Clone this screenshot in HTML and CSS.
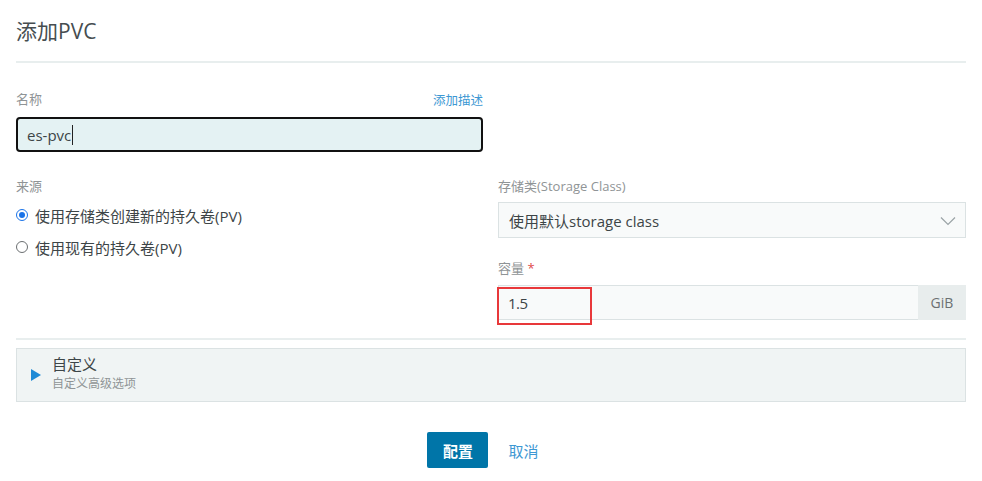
FILE: index.html
```html
<!DOCTYPE html>
<html lang="zh">
<head>
<meta charset="utf-8">
<title>添加PVC</title>
<link rel="stylesheet" href="styles.css">
</head>
<body>
<div class="page">
  <h1 class="title">添加PVC</h1>
  <div class="rule"></div>

  <div class="name-row">
    <div class="label-line">
      <span class="label">名称</span>
      <a class="link small">添加描述</a>
    </div>
    <div class="name-input">es-pvc<span class="caret"></span></div>
  </div>

  <div class="cols">
    <div class="col">
      <div class="label">来源</div>
      <div class="radios">
        <label class="radio"><span class="dot on"></span>使用存储类创建新的持久卷(PV)</label>
        <label class="radio"><span class="dot"></span>使用现有的持久卷(PV)</label>
      </div>
    </div>
    <div class="col">
      <div class="label">存储类(Storage Class)</div>
      <div class="select">
        <span>使用默认storage class</span>
        <svg class="chev" width="16" height="10" viewBox="0 0 16 10"><path d="M1 1.5 L8 8.5 L15 1.5" fill="none" stroke="#9aa3a6" stroke-width="1.2"/></svg>
      </div>
      <div class="label cap-label">容量 <span class="req">*</span></div>
      <div class="cap">
        <div class="cap-input"><span class="cap-val">1.5</span><span class="mark"></span></div>
        <div class="addon">GiB</div>
      </div>
    </div>
  </div>

  <div class="rule rule2"></div>

  <div class="custom">
    <svg class="tri" width="10" height="12" viewBox="0 0 10 12"><path d="M0 0 L10 6 L0 12 Z" fill="#1e8ad6"/></svg>
    <div class="custom-text">
      <div class="custom-title">自定义</div>
      <div class="custom-sub">自定义高级选项</div>
    </div>
  </div>

  <div class="actions">
    <button class="btn">配置</button>
    <a class="link cancel">取消</a>
  </div>
</div>
</body>
</html>
```

FILE: styles.css
```css
* { box-sizing: border-box; }
html, body { margin: 0; padding: 0; background: #fff; }
body {
  font-family: "Open Sans", "Noto Sans CJK SC", sans-serif;
  color: #4a4a4a;
}
.page { padding: 0 16px; width: 982px; }
.title {
  margin: 0;
  padding-top: 17px;
  height: 61px;
  font-size: 21px;
  font-weight: 400;
  line-height: 28px;
  color: #464d50;
}
.rule { height: 2px; background: #e8eeee; }
.name-row { width: 467px; margin-top: 26px; }
.label-line { display: flex; justify-content: space-between; align-items: center; height: 20px; }
.label { font-size: 13px; color: #8f9496; line-height: 20px; height: 20px; }
.link { color: #3d98d3; cursor: pointer; }
.small { font-size: 12.5px; }
.name-input {
  margin-top: 8px;
  height: 35px;
  border: 2px solid #111;
  border-radius: 4px;
  background: #e4f2f3;
  padding: 0 9px;
  font-size: 15px;
  color: #3d4547;
  display: flex;
  align-items: center;
}
.caret { display: inline-block; width: 1px; height: 20px; background: #222; margin-left: 1px; }
.cols { display: grid; grid-template-columns: 467px 468px; column-gap: 15px; margin-top: 24px; }
.radios { margin-top: 3px; }
.radio {
  display: flex; align-items: center; height: 32px;
  font-size: 15px; color: #3d4547;
}
.dot {
  width: 12px; height: 12px; border-radius: 50%;
  border: 1px solid #6b6f71; background: #fff;
  margin: 0 7px 0 0; position: relative; flex: none;
}
.dot.on { border-color: #1a73e8; }
.dot.on::after {
  content: ""; position: absolute; left: 2px; top: 2px;
  width: 6px; height: 6px; border-radius: 50%; background: #1a73e8;
}
.select {
  margin-top: 6px;
  height: 36px;
  border: 1px solid #dbe2e3;
  background: #f8fafa;
  display: flex; align-items: center; justify-content: space-between;
  padding: 0 9px 0 10px;
  font-size: 15px; color: #3d4547;
}
.chev { margin-top: 1px; }
.cap-label { margin-top: 20px; }
.req { color: #e04a4a; }
.cap { margin-top: 7px; display: flex; height: 35px; }
.cap-input {
  flex: 1; position: relative;
  border: 1px solid #dbe2e3; border-right: none;
  background: #f8fafa;
  display: flex; align-items: center; padding-left: 9px;
  font-size: 15px; color: #3d4547;
}
.cap-val { letter-spacing: -0.5px; }
.mark {
  position: absolute; left: -2px; top: 1px; width: 95px; height: 38px;
  border: 2px solid #e8383a;
}
.addon {
  width: 48px; background: #e8eded;
  display: flex; align-items: center; justify-content: center;
  font-size: 14px; color: #6b7072;
}
.rule2 { margin-top: 18px; }
.custom {
  margin-top: 8px;
  height: 54px;
  border: 1px solid #dbe2e3;
  background: #f0f4f4;
  display: flex; align-items: center;
  padding-left: 14px;
}
.custom-text { margin-left: 11px; margin-bottom: 4px; }
.custom-title { font-size: 15px; color: #3d4547; line-height: 20px; }
.custom-sub { font-size: 12px; color: #8f9496; line-height: 18px; margin-top: 1px; }
.actions { display: flex; justify-content: center; align-items: center; margin-top: 30px; gap: 20px; padding-right: 16px; }
.btn {
  width: 61px; height: 36px; border: none; border-radius: 2px;
  background: #0075a8; color: #fff;
  font-family: inherit; font-size: 15px; font-weight: 600;
}
.cancel { font-size: 15px; }
```
